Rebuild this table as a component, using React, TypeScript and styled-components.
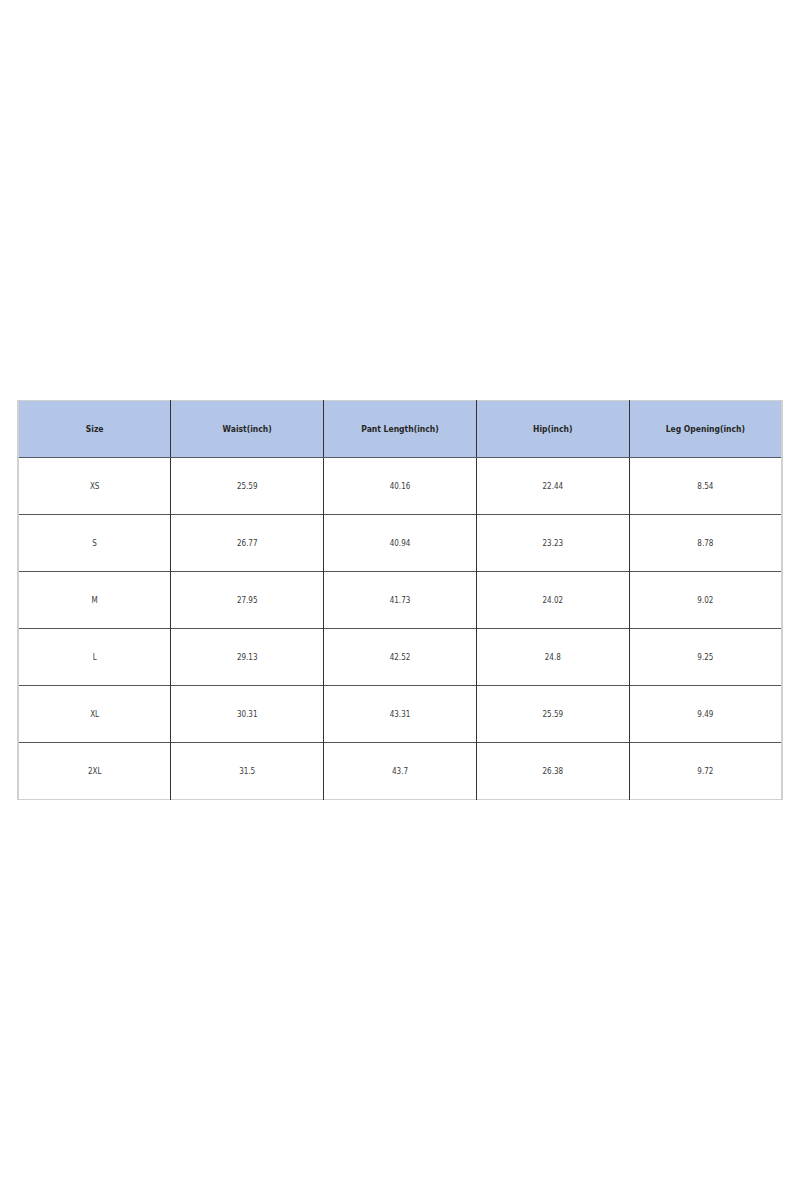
import React from 'react'
import styled, {createGlobalStyle} from 'styled-components'

const GlobalStyle = createGlobalStyle`
  html, body {
    margin: 0;
    padding: 0;
    background: #fff;
  }
`

const headers = ['Size', 'Waist(inch)', 'Pant Length(inch)', 'Hip(inch)', 'Leg Opening(inch)']

const rows = [
  ['XS', '25.59', '40.16', '22.44', '8.54'],
  ['S', '26.77', '40.94', '23.23', '8.78'],
  ['M', '27.95', '41.73', '24.02', '9.02'],
  ['L', '29.13', '42.52', '24.8', '9.25'],
  ['XL', '30.31', '43.31', '25.59', '9.49'],
  ['2XL', '31.5', '43.7', '26.38', '9.72'],
]

const App = () => {
  return (
    <Page>
      <GlobalStyle />
      <Table>
        <thead>
          <tr>
            {headers.map((h) => <Th key={h}>{h}</Th>)}
          </tr>
        </thead>
        <tbody>
          {rows.map((r) => (
            <tr key={r[0]}>
              {r.map((c, i) => <Td key={i}>{c}</Td>)}
            </tr>
          ))}
        </tbody>
      </Table>
    </Page>
  )
}

export default App

const Page = styled.div`
  width: 800px;
  height: 1200px;
  padding-top: 400px;
  padding-left: 17px;
  box-sizing: border-box;
  font-family: "DejaVu Sans Condensed", "Liberation Sans Narrow", "Liberation Sans", sans-serif;
`

const Table = styled.table`
  width: 766px;
  border-collapse: collapse;
  table-layout: fixed;
  border: 2px solid #d0d0d0;
  border-top-width: 1px;
  border-bottom-width: 1px;
`

const Th = styled.th`
  height: 56px;
  padding: 0;
  background: #b4c6e7;
  color: #262626;
  font-size: 8.5px;
  font-weight: bold;
  text-align: center;
  border-left: 1px solid #333;
  border-bottom: 1px solid #555c66;
  &:first-child {
    border-left: none;
  }
`

const Td = styled.td`
  height: 56px;
  padding: 0;
  color: #3a3a3a;
  font-size: 8px;
  text-align: center;
  border-left: 1px solid #333;
  border-top: 1px solid #555;
  &:first-child {
    border-left: none;
  }
`
